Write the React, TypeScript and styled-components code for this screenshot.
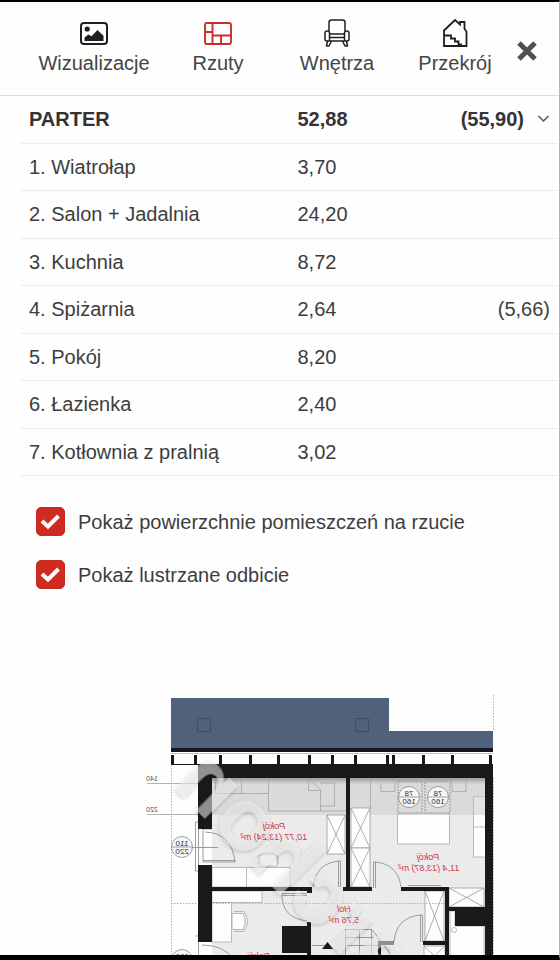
import React, { useState } from "react";
import styled, { createGlobalStyle, css } from "styled-components";

const GlobalStyle = createGlobalStyle`
  *, *::before, *::after { box-sizing: border-box; }
  body {
    margin: 0;
    background: #fff;
    color: #3d3d3d;
    font-family: "Liberation Sans", Arial, sans-serif;
    font-size: 20px;
    line-height: 24px;
  }
`;

const Page = styled.div`
  display: flex;
  flex-direction: column;
  height: 100vh;
  overflow: hidden;
  border-top: 2px solid #000;
  border-bottom: 5px solid #000;
  border-right: 1px solid #b5b5b5;
  background: #fefefe;
`;

const Header = styled.header`
  flex: none;
  display: grid;
  grid-template-columns: 1fr 43px;
  align-items: center;
  padding: 15px 0 20px 32px;
  border-bottom: 1px solid #dcdcdc;
`;

const Tabs = styled.nav`
  display: grid;
  grid-template-columns: 124fr 124fr 114fr 122fr;
`;

const Tab = styled.button<{ $active?: boolean }>`
  display: flex;
  flex-direction: column;
  align-items: center;
  gap: 2px;
  padding: 0;
  border: 0;
  background: none;
  color: #444;
  font: inherit;
  cursor: pointer;
  svg { color: ${(p) => (p.$active ? "#c9302c" : "#1f1f1f")}; }
`;

const CloseButton = styled.button`
  display: flex;
  justify-self: start;
  padding: 10px 0 0;
  border: 0;
  background: none;
  color: #505050;
  cursor: pointer;
`;

const Main = styled.main`
  flex: 1;
  min-height: 0;
  overflow: hidden;
`;

const TableWrap = styled.div`
  padding: 0 1px 0 21px;
`;

const RoomTable = styled.table`
  width: 100%;
  height: 380px;
  border-collapse: separate;
  border-spacing: 0;
  table-layout: fixed;
`;

const cell = css`
  padding: 0 8px;
  border-bottom: 1px solid #ececec;
  text-align: left;
  white-space: nowrap;
`;

const HeadCell = styled.th`
  ${cell}
  color: #333;
`;

const Cell = styled.td`
  ${cell}
`;

const NameCol = styled.col`
  width: 50%;
`;

const Extra = styled.span`
  display: flex;
  align-items: center;
  justify-content: flex-end;
  gap: 13px;
`;

const Toggle = styled.button`
  display: flex;
  padding: 0;
  border: 0;
  background: none;
  color: #555;
  cursor: pointer;
`;

const Options = styled.div`
  display: flex;
  flex-direction: column;
  gap: 24px;
  padding: 31px 36px 0;
`;

const Option = styled.label`
  display: flex;
  align-items: center;
  gap: 13px;
  cursor: pointer;
`;

const TickBox = styled.span`
  display: grid;
  width: 29px;
  height: 29px;
  > * { grid-area: 1 / 1; }
  svg { place-self: center; pointer-events: none; }
`;

const TickInput = styled.input`
  appearance: none;
  width: 100%;
  height: 100%;
  margin: 0;
  border: 1px solid #c62a20;
  border-radius: 5px;
  background: #fff;
  cursor: pointer;
  &:checked { background: #d02b20; }
`;

const Plan = styled.svg`
  display: block;
  width: 100%;
  height: auto;
  margin-top: 100px;
  font-family: "Liberation Sans", Arial, sans-serif;
`;

const ImageIcon = () => (
  <svg width="30" height="32" viewBox="0 0 30 32" fill="none" aria-hidden="true">
    <rect x="2" y="6" width="26" height="21" rx="3" stroke="currentColor" strokeWidth="2" />
    <circle cx="8.2" cy="12" r="2.6" fill="currentColor" />
    <path d="M5.5 24v-3.5l4-3 3 1.8 6-6.3 2.2 2.3 3.8 3.5V24z" fill="currentColor" />
  </svg>
);

const PlanIcon = () => (
  <svg width="30" height="32" viewBox="0 0 30 32" fill="none" stroke="currentColor" strokeWidth="1.9" aria-hidden="true">
    <rect x="2" y="6" width="26" height="21" rx="2" />
    <path d="M9.500 6v21M9.500 18.500h18.500M2 15h7.500M18 18.500v8.500" />
  </svg>
);

const ArmchairIcon = () => (
  <svg width="30" height="32" viewBox="0 0 30 32" fill="none" stroke="currentColor" strokeWidth="1.5" strokeLinejoin="round" aria-hidden="true">
    <path d="M7 14V5.500q0-2.500 2.500-2.500h11q2.500 0 2.500 2.500V14" />
    <path d="M7.500 24V16q0-2-2.200-2Q3 14 3 16v6q0 2 2 2h20q2 0 2-2v-6q0-2-2.200-2-2.300 0-2.300 2v8M7.500 17h15M7.500 20.500h15" />
    <path d="M5.500 24L4.500 29h2.500l2.500-5M24.500 24l1 5H23l-2.500-5" />
  </svg>
);

const SectionIcon = () => (
  <svg width="30" height="32" viewBox="0 0 30 32" fill="none" stroke="currentColor" strokeWidth="1.800" aria-hidden="true">
    <path d="M4 29V13.500L15 3l5 4.500V5h4.500v7l2 2.500V29z" />
    <path d="M4 18.500h7v3h4v3h3.500v3h2.500v1.500" />
  </svg>
);

const CloseIcon = () => (
  <svg width="22" height="22" viewBox="0 0 22 22" stroke="currentColor" strokeWidth="5" aria-hidden="true">
    <path d="M3 3l16 16M19 3L3 19" />
  </svg>
);

const ChevronIcon = () => (
  <svg width="13" height="10" viewBox="0 0 13 10" fill="none" stroke="currentColor" strokeWidth="1.500" aria-hidden="true">
    <path d="M1.500 2l5 5 5-5" />
  </svg>
);

const TickIcon = () => (
  <svg width="21" height="17" viewBox="0 0 21 17" fill="none" stroke="#fff" strokeWidth="4" aria-hidden="true">
    <path d="M2 8l6 5.500L18.500 3" />
  </svg>
);

type LabelProps = { x: number; y: number; size?: number; color?: string; italic?: boolean; children: string };

const Flipped = ({ x, y, size = 9, color = "#cf3a4c", italic, children }: LabelProps) => (
  <text
    transform={`translate(${x} ${y}) scale(-1 1)`}
    textAnchor="middle"
    fontSize={size}
    fontStyle={italic ? "italic" : "normal"}
    fill={color}
  >
    {children}
  </text>
);

const Crossed = ({ x, y, w, h }: { x: number; y: number; w: number; h: number }) => (
  <path
    d={`M${x} ${y}h${w}v${h}h${-w}zL${x + w} ${y + h}M${x + w} ${y}L${x} ${y + h}`}
    fill="#fdfdfd"
    stroke="#999"
    strokeWidth="0.8"
  />
);

const Mark = ({ x, y, top, bottom }: { x: number; y: number; top: string; bottom: string }) => (
  <g>
    <circle cx={x} cy={y} r="10.500" fill="#f7f7f7" stroke="#888" strokeWidth="0.8" />
    <path d={`M${x - 10} ${y}h20`} stroke="#888" strokeWidth="0.8" />
    <Flipped x={x} y={y - 1} size={8} color="#333">{top}</Flipped>
    <Flipped x={x} y={y + 7} size={8} color="#333">{bottom}</Flipped>
  </g>
);

const posts = [171, 194, 219, 249, 277, 308, 331, 354, 386, 392, 422, 451, 489];

const FloorPlan = () => (
  <Plan viewBox="0 689 559 290" role="img" aria-label="Rzut parteru">
    <defs>
      <linearGradient id="wallShade" x1="0" y1="0" x2="0" y2="1">
        <stop offset="0" stopColor="#9b9b9d" />
        <stop offset="1" stopColor="#d8d8da" />
      </linearGradient>
      <filter id="relief" x="-20%" y="-20%" width="140%" height="140%">
        <feDropShadow dx="-1" dy="1.500" stdDeviation="2" floodColor="#000" floodOpacity="0.4" />
      </filter>
    </defs>

    <path d="M171 698h218v33h104v18H171z" fill="#4f617b" />
    <path d="M197.500 718.500h13v13h-13zM355.500 718.500h13v13h-13z" fill="none" stroke="#3e4d66" />
    <path d="M171 748h322v4H171z" fill="#151621" />
    <path d="M171 753.500h322" stroke="#c4c4c4" />
    <path d="M171 764.500h30" stroke="#1a181b" />
    {posts.map((x) => (
      <rect key={x} x={x} y="755" width="3" height="9" fill="#1a181b" />
    ))}

    <path d="M212 778h273v190H212z" fill="#ebebeb" />
    <path d="M212 778h273v37H212z" fill="#dadadc" />
    <path d="M212 778h273v6H212z" fill="url(#wallShade)" />

    <g fill="none" stroke="#a3a3a3" strokeWidth="0.8">
      <path d="M215.500 778v15.500h53V778M241.500 778v15.500M268.500 793v18h78M308.500 778v12.500h12M308.500 778l12 12v21M320.500 783h14v23h-14" />
      <path d="M370.500 778v30M381 784v7.500h14V778M452 778v13.500h14V778" />
      <path d="M398 781h24v32h-24zM425 781h25v32h-25z" strokeDasharray="2 1" stroke="#888" />
      <path d="M408 885.500h33" stroke="#888" />
    </g>
    <g fill="#fdfdfd" stroke="#aaa" strokeWidth="0.8">
      <path d="M397.500 814h52v30h-52z" />
      <path d="M473.500 797h12v60h-12zM473.500 827h12" />
      <path d="M212 867.500h78V887h-78zM246.500 867.500V887" />
      <path d="M212 891h50v11.500h-50zM212 902.500h19.500V942H212z" />
      <path d="M260 866v-10q9-4 17 0v10zM232 913.500h11q4 8 0 16h-11z" />
      <path d="M258 864v-8q10-7 20 0v8M234 911.500h10q7 10 0 20h-10" fill="none" />
      <path d="M450 911h5v15h29v40h-34z" />
      <circle cx="454" cy="930" r="2.500" />
    </g>
    <path d="M474 798h11v17h-11z" fill="#e2e2e4" />

    <Crossed x={327} y={815} w={18} h={39} />
    <Crossed x={351} y={808} w={19} h={40} />
    <Crossed x={351} y={848} w={19} h={39} />
    <Crossed x={425} y={891} w={19} h={50} />
    <Crossed x={449} y={888} w={35} h={19} />
    <Crossed x={424} y={946} w={21} h={20} />

    <g fill="none" stroke="#929292" strokeWidth="0.9">
      <path d="M203 829v33h32v-1.500H203M205 832q27 1 30 30M203 829h9M191 847.500h27" />
      <path d="M195.500 822h3v49h-3zM195.500 936h3v30M202 945q22 0 31 14" />
      <path d="M373.500 888v-26h2v26M375 862q23 2 26 25" />
      <path d="M420.500 942v-27h2v27M421 915q-25 2-27 27" />
      <path d="M338.500 887v-26h2v26M339 861q-23 2-26 26" />
      <path d="M307 893.500h-25v2h25M282 895q0 23 25 26" />
      <path d="M345 929.500h27l18 24M345 937.500h29M345 945.500h36M345.500 929v30M359.500 929v30M371.500 929v30M312 945.500h18" />
      <path d="M147 783.500h51M147 814.500h51" stroke="#aaa" />
      <path d="M171.500 765v194M171 903.500h274M493.500 695v36M493.500 778v180" strokeDasharray="1.500 1.500" stroke="#aaa" />
    </g>

    <path
      fill="#1a181b"
      d="M198 764h295v14H212v51h-14zM198 865h14v77h-14zM485 764h8v200h-8zM346 778h4v109h22v4h-29v-4h3zM212 887h100v6h-5v-2h-95zM401 887h48v20h44v19h-38v-15h-6v53h-4v-73h-44zM282 926h25v-4h4v42h-4v-11h-25zM378 941h16v4h-13v20h-3zM423 941h23v4h-23z"
    />

    <Flipped x={152} y={781} size={7} color="#555">140</Flipped>
    <Flipped x={152} y={812} size={7} color="#555">220</Flipped>
    <Mark x={182} y={847} top="110" bottom="220" />
    <Mark x={182} y={960} top="110" bottom="220" />
    <Mark x={409} y={797} top="78" bottom="160" />
    <Mark x={438} y={797} top="78" bottom="160" />

    <text
      transform="translate(171 785) scale(-1 1) rotate(-45)"
      textAnchor="end"
      fontSize="88"
      fontWeight="bold"
      fill="#f4f4f4"
      fillOpacity="0.5"
      filter="url(#relief)"
    >
      archon
    </text>

    <path d="M322 949l5.500-7 5.500 7z" fill="#1a181b" />
    <Flipped x={274} y={829} italic>Pokój</Flipped>
    <Flipped x={274} y={840} italic>10,77 (13,24) m²</Flipped>
    <Flipped x={428} y={860} italic>Pokój</Flipped>
    <Flipped x={429} y={871} italic>11,4 (13,87) m²</Flipped>
    <Flipped x={344} y={912} italic>Hol</Flipped>
    <Flipped x={344} y={923} italic>5,76 m²</Flipped>
    <Flipped x={259} y={959} italic>Pokój</Flipped>
  </Plan>
);

const rooms = [
  { name: "1. Wiatrołap", area: "3,70", extra: "" },
  { name: "2. Salon + Jadalnia", area: "24,20", extra: "" },
  { name: "3. Kuchnia", area: "8,72", extra: "" },
  { name: "4. Spiżarnia", area: "2,64", extra: "(5,66)" },
  { name: "5. Pokój", area: "8,20", extra: "" },
  { name: "6. Łazienka", area: "2,40", extra: "" },
  { name: "7. Kotłownia z pralnią", area: "3,02", extra: "" },
];

const tabs = [
  { label: "Wizualizacje", Icon: ImageIcon },
  { label: "Rzuty", Icon: PlanIcon },
  { label: "Wnętrza", Icon: ArmchairIcon },
  { label: "Przekrój", Icon: SectionIcon },
];

export default function App() {
  const [active, setActive] = useState("Rzuty");
  const [areas, setAreas] = useState(true);
  const [mirror, setMirror] = useState(true);

  return (
    <Page>
      <GlobalStyle />
      <Header>
        <Tabs>
          {tabs.map(({ label, Icon }) => (
            <Tab key={label} type="button" $active={label === active} onClick={() => setActive(label)}>
              <Icon />
              {label}
            </Tab>
          ))}
        </Tabs>
        <CloseButton type="button" aria-label="Zamknij">
          <CloseIcon />
        </CloseButton>
      </Header>
      <Main>
        <TableWrap>
          <RoomTable>
            <colgroup>
              <NameCol />
              <col />
              <col />
            </colgroup>
            <tbody>
              <tr>
                <HeadCell scope="col">PARTER</HeadCell>
                <HeadCell scope="col">52,88</HeadCell>
                <HeadCell scope="col">
                  <Extra>
                    (55,90)
                    <Toggle type="button" aria-label="Zwiń parter">
                      <ChevronIcon />
                    </Toggle>
                  </Extra>
                </HeadCell>
              </tr>
              {rooms.map((room) => (
                <tr key={room.name}>
                  <Cell>{room.name}</Cell>
                  <Cell>{room.area}</Cell>
                  <Cell>
                    <Extra>{room.extra}</Extra>
                  </Cell>
                </tr>
              ))}
            </tbody>
          </RoomTable>
        </TableWrap>
        <Options>
          <Option>
            <TickBox>
              <TickInput type="checkbox" checked={areas} onChange={(e) => setAreas(e.target.checked)} />
              {areas && <TickIcon />}
            </TickBox>
            Pokaż powierzchnie pomieszczeń na rzucie
          </Option>
          <Option>
            <TickBox>
              <TickInput type="checkbox" checked={mirror} onChange={(e) => setMirror(e.target.checked)} />
              {mirror && <TickIcon />}
            </TickBox>
            Pokaż lustrzane odbicie
          </Option>
        </Options>
        <FloorPlan />
      </Main>
    </Page>
  );
}
